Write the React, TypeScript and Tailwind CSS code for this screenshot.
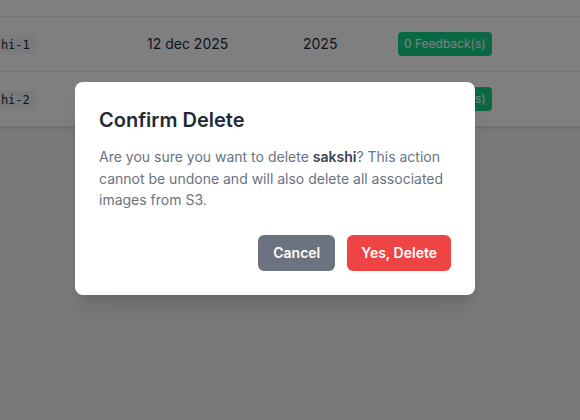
import React from 'react';

const rows = [
  { code: 'sakshi-1', date: '12 dec 2025', year: '2025', feedback: 0 },
  { code: 'sakshi-2', date: '14 dec 2025', year: '2025', feedback: 0 },
];

export default function App() {
  return (
    <div className="relative w-[580px] h-[420px] overflow-hidden bg-[#f3f4f6] font-['Inter',sans-serif]">
      {/* table behind the dialog */}
      <div className="bg-white shadow-sm -ml-[58px] w-[700px]">
        <div className="h-[17px] border-b border-[#e5e7eb]" />
        {rows.map((r) => (
          <div
            key={r.code}
            className="grid grid-cols-[181px_156px_95px_1fr] items-center h-[55px] border-b border-[#e5e7eb] text-sm text-[#1f2937]"
          >
            <div className="px-6">
              <span className="font-['DejaVu_Sans_Mono',monospace] text-xs bg-[#f3f4f6] rounded px-1.5 py-0.5 text-[#1f2937]">
                {r.code}
              </span>
            </div>
            <div className="px-6">{r.date}</div>
            <div className="px-6">{r.year}</div>
            <div className="px-6">
              <span className="inline-block bg-[#14d08a] text-white text-xs rounded px-[6px] py-1">
                {r.feedback} Feedback(s)
              </span>
            </div>
          </div>
        ))}
      </div>

      {/* overlay */}
      <div className="absolute inset-0 bg-black/50 flex items-start pt-[82px] pl-[75px]">
        <div className="w-[400px] bg-white rounded-lg shadow-xl p-6">
          <h2 className="text-xl font-semibold text-[#1f2937] leading-7">Confirm Delete</h2>
          <p className="mt-3 text-sm text-[#6b7280] leading-[21.5px]">
            Are you sure you want to delete <span className="font-semibold text-[#374151]">sakshi</span>? This action
            cannot be undone and will also delete all associated images from S3.
          </p>
          <div className="mt-6 flex justify-end gap-3">
            <button className="px-[15px] py-2 rounded-md bg-[#6b7280] text-white text-sm font-semibold">Cancel</button>
            <button className="px-[14px] py-2 rounded-md bg-[#ef4444] text-white text-sm font-semibold">Yes, Delete</button>
          </div>
        </div>
      </div>
    </div>
  );
}
